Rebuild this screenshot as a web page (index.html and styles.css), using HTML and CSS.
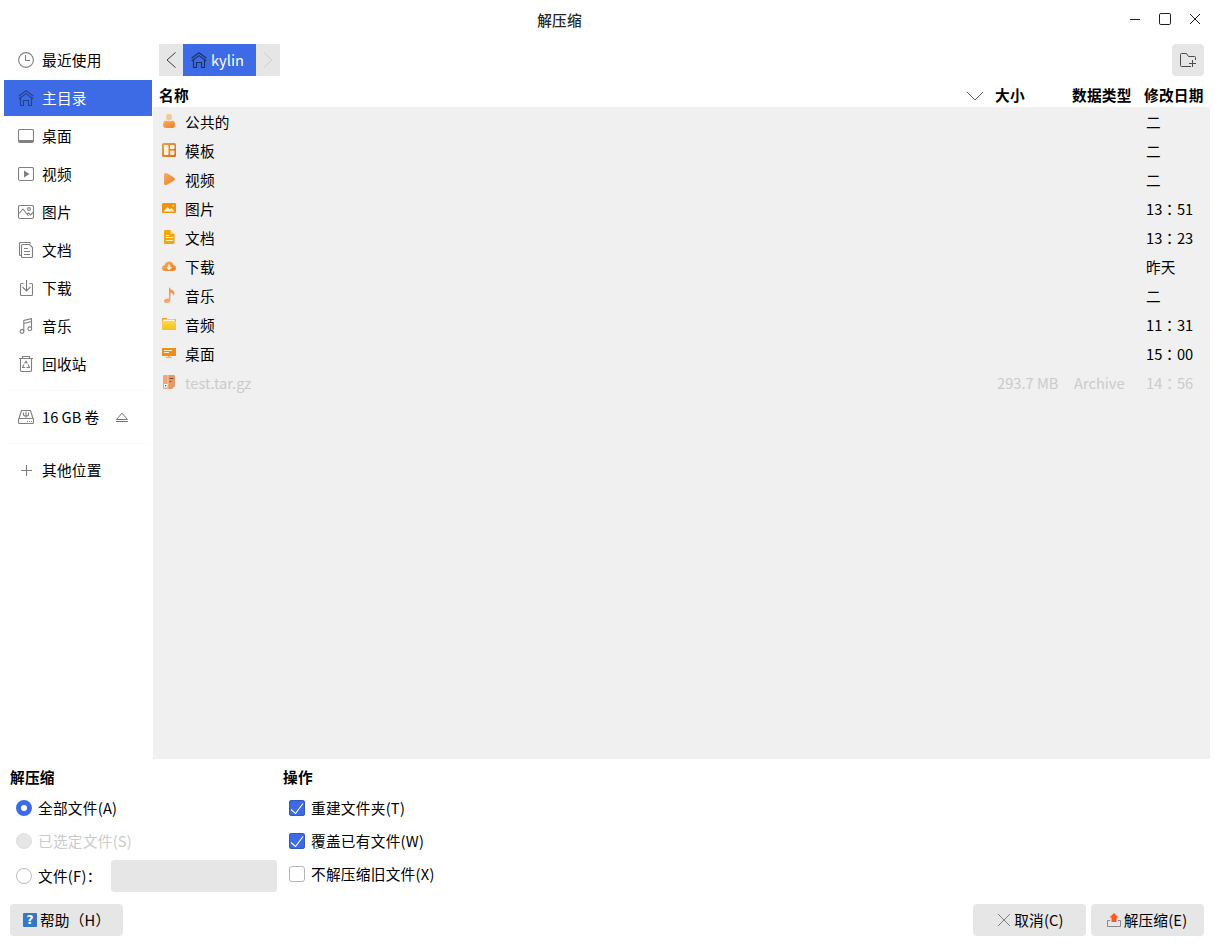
FILE: index.html
```html
<!DOCTYPE html>
<html lang="zh-CN">
<head>
<meta charset="utf-8">
<title>解压缩</title>
<link rel="stylesheet" href="styles.css">
</head>
<body>
<div class="window">
  <header class="titlebar">
    <h1 class="title">解压缩</h1>
    <div class="controls">
      <svg class="ctl" viewBox="0 0 16 16"><path d="M3 8.500h10"/></svg>
      <svg class="ctl" viewBox="0 0 16 16"><rect x="2.500" y="2.500" width="11" height="11" rx="1.300"/></svg>
      <svg class="ctl" viewBox="0 0 16 16"><path d="M3 3l10 10M13 3L3 13"/></svg>
    </div>
  </header>

  <div class="main">
    <nav class="sidebar">
      <div class="place"><svg class="ico" viewBox="0 0 16 16"><circle cx="8" cy="8" r="7.400"/><path d="M7.500 3v5.500H12"/></svg><span>最近使用</span></div>
      <div class="place selected"><svg class="ico" viewBox="0 0 16 16"><path d="M.5 6.200L8 .7l7.500 5.500M.7 9L8 3.600 15.300 9M2.500 8v7.500h3v-5h5v5h3V8"/></svg><span>主目录</span></div>
      <div class="place"><svg class="ico" viewBox="0 0 16 16"><rect x=".5" y="1.500" width="15" height="13" rx="1.500"/><path class="thick" d="M1 13h14"/></svg><span>桌面</span></div>
      <div class="place"><svg class="ico" viewBox="0 0 16 16"><rect x=".5" y="1.500" width="15" height="13" rx="1.500"/><path class="solid" d="M6 4.500l5.500 3.500L6 11.500z"/></svg><span>视频</span></div>
      <div class="place"><svg class="ico" viewBox="0 0 16 16"><rect x=".5" y="1.500" width="15" height="13" rx="1.500"/><path d="M1 9.500l4-4.500 5.500 7M9 10l1.500-1 2 2L15.500 8"/><circle cx="11" cy="5" r="1.400"/></svg><span>图片</span></div>
      <div class="place"><svg class="ico" viewBox="0 0 16 16"><path d="M12.500 1.500q0-1-1-1h-9q-1 0-1 1v11q0 1 1 1h1"/><path d="M4.500 2.500h7l3 3v9q0 1-1 1h-9q-1 0-1-1v-11q0-1 1-1zM6 6.500h4M6 9.500h6M6 12.500h6"/></svg><span>文档</span></div>
      <div class="place"><svg class="ico" viewBox="0 0 16 16"><path d="M5.500 3.500h-2q-1 0-1 1v10q0 1 1 1h10q1 0 1-1v-10q0-1-1-1h-2M8.500 0v11M4.500 7l4 4 4-4"/></svg><span>下载</span></div>
      <div class="place"><svg class="ico" viewBox="0 0 16 16"><circle cx="4" cy="13.500" r="1.900"/><circle cx="11.800" cy="10.800" r="1.900"/><path d="M5.800 13.500V2.500L13.500.6v10.200M5.800 5.500l7.700-2"/></svg><span>音乐</span></div>
      <div class="place"><svg class="ico" viewBox="0 0 16 16"><path d="M1 2.500h14M4.500 2.500v-2h7v2M2.500 2.500v12q0 1 1 1h9q1 0 1-1v-12M6.500 7.500L8 5.200 9.500 7.500M5.900 8.500L4.600 11.500h2.600M10.100 8.500l1.300 3H8.500"/></svg><span>回收站</span></div>
      <hr class="rule">
      <div class="place volume"><svg class="ico" viewBox="0 0 16 16"><path d="M1 9.500L3.500 1.500h9L15 9.500"/><rect x=".5" y="9.500" width="15" height="5" rx="1"/><path d="M5.500 3.500v2q0 1.500 2.500 1.500 2.500 0 2.500-1.500v-2M8 2.500v6M9 12.500h1M11 12.500h1M13 12.500h1"/></svg><span>16 GB 卷</span><svg class="eject" viewBox="0 0 14 12"><path d="M1.500 8.500L7 2.200l5.500 6.300zM1 10.500h12"/></svg></div>
      <hr class="rule">
      <div class="place"><svg class="ico" viewBox="0 0 16 16"><path d="M3 8.500h11M8.500 3v11"/></svg><span>其他位置</span></div>
    </nav>

    <section class="browser">
      <div class="pathbar">
        <div class="crumbs">
          <div class="arrow"><svg viewBox="0 0 24 32"><path d="M16.500 8.500L8 16l8.500 7.500"/></svg></div>
          <div class="crumb"><svg class="ico" viewBox="0 0 16 16"><path d="M.5 6.200L8 .7l7.500 5.500M.7 9L8 3.600 15.300 9M2.500 8v7.500h3v-5h5v5h3V8"/></svg><span>kylin</span></div>
          <div class="arrow off"><svg viewBox="0 0 24 32"><path d="M8 8.500l8 7.500-8 7.500"/></svg></div>
        </div>
        <button class="newfolder"><svg viewBox="0 0 16 16"><path d="M11 14.500H1.500q-1 0-1-1v-11q0-1 1-1h5l2 3h6q1 0 1 1V8M12.500 8v7M9 11.500h7"/></svg></button>
      </div>
      <div class="grid head">
        <span>名称</span><svg class="sort" viewBox="0 0 18 10"><path d="M1 1l8 8 8-8"/></svg><span>大小</span><span>数据类型</span><span>修改日期</span>
      </div>
      <div class="list">
        <svg class="defs"><defs>
          <linearGradient id="or" x1="0" y1="0" x2="1" y2="1"><stop offset="0" stop-color="#f8b063"/><stop offset="1" stop-color="#f07a1c"/></linearGradient>
          <linearGradient id="br" x1="0" y1="0" x2="1" y2="1"><stop offset="0" stop-color="#efa243"/><stop offset="1" stop-color="#d96c22"/></linearGradient>
          <linearGradient id="ye" x1="0" y1="0" x2="0" y2="1"><stop offset="0" stop-color="#fbd84b"/><stop offset="1" stop-color="#f3c11c"/></linearGradient>
          <linearGradient id="nt" x1="0" y1="0" x2="0" y2="1"><stop offset="0" stop-color="#f3922e"/><stop offset="1" stop-color="#f9a676"/></linearGradient>
        </defs></svg>
        <div class="grid row"><svg class="ficon" viewBox="0 0 16 16"><path d="M2 12q0-4 3-4.200 3 1 6 0Q14 8 14 12q0 3-3 3H5q-3 0-3-3z" fill="url(#or)"/><rect x="5" y="1" width="6" height="6.500" rx="2.400" fill="#efcb95"/></svg><span>公共的</span><span class="date" lang="zh-TW">二</span></div>
        <div class="grid row"><svg class="ficon" viewBox="0 0 16 16"><rect x="1" y="1" width="14" height="14" rx="1.500" fill="url(#br)"/><rect x="3" y="3" width="4.500" height="10" rx="1" fill="#fff2e4"/><rect x="9" y="3" width="4.500" height="4" rx="1" fill="#fff2e4"/><rect x="9" y="8.500" width="4.500" height="4.500" rx="1" fill="#fbe2c8"/></svg><span>模板</span><span class="date" lang="zh-TW">二</span></div>
        <div class="grid row"><svg class="ficon" viewBox="0 0 16 16"><path d="M3 3.500Q3 2 4.500 2q2 0 9 5 1 1 0 2-7 5-9 5Q3 14 3 12.500z" fill="url(#or)"/></svg><span>视频</span><span class="date" lang="zh-TW">二</span></div>
        <div class="grid row"><svg class="ficon" viewBox="0 0 16 16"><rect x="1" y="3" width="14" height="10" rx="1" fill="#f19310"/><path d="M2.500 11.500L6.500 7l2.500 2.500 1.500-1.500 3 3.500z" fill="#fff5cf"/><circle cx="12.200" cy="5.800" r=".8" fill="#fff5cf"/></svg><span>图片</span><span class="date" lang="zh-TW">13：51</span></div>
        <div class="grid row"><svg class="ficon" viewBox="0 0 16 16"><path d="M3 2q0-1 1-1h5.500L13.500 5V14q0 1-1 1H4q-1 0-1-1z" fill="#f1a70e"/><path d="M9.500 1l4 4h-4z" fill="#f8dc80"/><path d="M5 6.500h3.500M5 8.500h7M5 11.500h7" stroke="#fff0bd"/></svg><span>文档</span><span class="date" lang="zh-TW">13：23</span></div>
        <div class="grid row"><svg class="ficon" viewBox="0 0 16 16"><path d="M4 13q-3 0-3-3 0-2.500 2.500-3Q4.500 3.500 8 3.500T12.500 7Q15 7.500 15 10t-3 3z" fill="url(#or)"/><path d="M8 6.500v4.500M5.800 9L8 11.200 10.200 9" fill="none" stroke="#fff" stroke-width="1.500"/></svg><span>下载</span><span class="date">昨天</span></div>
        <div class="grid row"><svg class="ficon" viewBox="0 0 16 16"><path d="M8 0q1 2 4 3.500 2 1.500 1 5.500-.5-2.500-3.500-3.500v7q0 3.500-4 3.500-3 0-2.500-2.500.5-2 5-2z" fill="url(#nt)"/></svg><span>音乐</span><span class="date" lang="zh-TW">二</span></div>
        <div class="grid row"><svg class="ficon" viewBox="0 0 16 16"><path d="M1 3q0-1 1-1h3.500l1 1H14q1 0 1 1v3H1z" fill="#e89d24"/><path d="M2 3.500h12v3H2z" fill="#fff5d8"/><path d="M1 5h14v8q0 1-1 1H2q-1 0-1-1z" fill="url(#ye)"/></svg><span>音频</span><span class="date" lang="zh-TW">11：31</span></div>
        <div class="grid row"><svg class="ficon" viewBox="0 0 16 16"><rect x="1" y="3" width="14" height="8" fill="#f08d18"/><path d="M3 5.500h8M3 7.500h5" stroke="#fff0cf"/><path d="M5 12.500h6" stroke="#f5b25e"/><path d="M7 11h2v1H7z" fill="#f5b25e"/></svg><span>桌面</span><span class="date" lang="zh-TW">15：00</span></div>
        <div class="grid row off"><svg class="ficon" viewBox="0 0 16 16"><rect x="2" y="1" width="5" height="14" rx="1" fill="#eda878"/><path d="M7 1h6q1 0 1 1v10l-3 3H7z" fill="#e59a64"/><path d="M7 1v14" stroke="#f5d2b8" stroke-width=".7"/><path d="M8.500 4.500h4M8.500 7.500h2" stroke="#76503d"/><rect x="3" y="10" width="3.500" height="3.500" fill="#fff"/><rect x="4" y="11" width="1.300" height="1.300" fill="#76503d"/></svg><span class="plain">test.tar.gz</span><span class="size">293.7 MB</span><span class="type">Archive</span><span class="date" lang="zh-TW">14：56</span></div>
      </div>
    </section>
  </div>

  <div class="options">
    <fieldset class="group files">
      <legend>解压缩</legend>
      <label class="opt"><i class="radio on"></i>全部文件(A)</label>
      <label class="opt off"><i class="radio disabled"></i>已选定文件(S)</label>
      <label class="opt tall"><i class="radio"></i><span class="label">文件(F)：</span><span class="field"></span></label>
    </fieldset>
    <fieldset class="group">
      <legend>操作</legend>
      <label class="opt"><svg class="check" viewBox="0 0 16 16"><path d="M2 9.500l4.500 4L14 3.500"/></svg>重建文件夹(T)</label>
      <label class="opt"><svg class="check" viewBox="0 0 16 16"><path d="M2 9.500l4.500 4L14 3.500"/></svg>覆盖已有文件(W)</label>
      <label class="opt"><i class="check empty"></i>不解压缩旧文件(X)</label>
    </fieldset>
  </div>

  <footer class="actions">
    <button class="btn help"><span class="qmark">?</span>帮助（H）</button>
    <div class="right">
      <button class="btn cancel"><svg viewBox="0 0 14 14"><path d="M1 1l12 12M13 1L1 13" stroke="#808080"/></svg>取消(C)</button>
      <button class="btn extract"><svg viewBox="0 0 14 14"><path d="M3 7.500H.5v6h13v-6H11" stroke="#888"/><path d="M7 0l4.500 4.500H9.500V9h-5V4.500h-2z" fill="#ff5722"/></svg>解压缩(E)</button>
    </div>
  </footer>
</div>
</body>
</html>
```
FILE: styles.css
```css
* { box-sizing: border-box; }
body {
  margin: 0;
  background: #fff;
  color: #000;
  font: 14.667px/22px "Noto Sans CJK SC", "Noto Sans", sans-serif;
}
svg { display: block; fill: none; flex: none; }
.window { display: flex; flex-direction: column; width: 1214px; height: 946px; overflow: hidden; }

.titlebar { display: grid; grid-template-columns: 1fr auto; height: 40px; align-items: center; padding: 0 11px 0 0; }
.title { margin: 0; padding-right: 8px; font-size: 14.667px; font-weight: 500; text-align: center; color: #262626; letter-spacing: .2px; }
.controls { display: flex; gap: 14px; margin-top: -2px; }
.ctl { width: 16px; height: 16px; stroke: #1f1f1f; }

.main { display: flex; height: 719px; }
.sidebar { width: 153px; padding: 2px 1px 0 4px; display: flex; flex-direction: column; gap: 2px; letter-spacing: .25px; }
.place { display: flex; align-items: center; height: 36px; flex: none; padding-left: 14px; gap: 8px; }
.volume { letter-spacing: 0; }
.ico { width: 16px; height: 16px; stroke: #808080; stroke-width: 1.1; }
.ico .solid { fill: #808080; stroke: none; }
.ico .thick { stroke-width: 2; }
.selected { background: #3d6be5; color: #fff; }
.selected .ico { stroke: #26418c; }
.rule { width: 141px; height: 1px; margin: 6px 0 6px 4px; border: 0; background: #fafafa; flex: none; }
.eject { width: 14px; height: 12px; stroke: #787878; margin-left: 8px; }

.browser { width: 1057px; display: flex; flex-direction: column; }
.pathbar { display: flex; justify-content: space-between; height: 44px; padding: 4px 6px 8px; }
.crumbs { display: flex; height: 32px; background: #e6e6e6; }
.arrow svg { width: 24px; height: 32px; stroke: #3c3c3c; }
.arrow.off svg { stroke: #cfcfcf; }
.crumb { display: flex; align-items: center; gap: 4px; width: 73px; padding-left: 8px; background: #3d6be5; color: #fff; }
.crumb .ico { stroke: #1f305f; }
.newfolder { display: grid; place-items: center; width: 32px; height: 32px; padding: 0; border: 0; border-radius: 4px; background: #e6e6e6; }
.newfolder svg { width: 16px; height: 16px; stroke: #4a4a4a; }

.grid { display: grid; align-items: center; }
.head { grid-template-columns: 807px 29px 77px 72px 1fr; height: 23px; padding: 0 0 2px 6px; font-weight: 700; letter-spacing: .25px; white-space: nowrap; }
.sort { width: 18px; height: 10px; margin-top: 1px; stroke: #606060; }
.list { height: 652px; background: #f0f0f0; letter-spacing: .25px; }
.defs { width: 0; height: 0; }
.row { grid-template-columns: 24px 803px 77px 72px 1fr; height: 29px; padding-left: 8px; white-space: nowrap; }
.ficon { width: 16px; height: 16px; margin-top: -2px; }
.plain, .size, .type, .date { letter-spacing: 0; }
.size { grid-column: 3; padding-left: 9px; }
.type { grid-column: 4; padding-left: 9px; }
.date { grid-column: 5; padding-left: 9px; }
.date:lang(zh-TW) { font-family: "Noto Sans CJK TC", sans-serif; }
.off { color: #cbcbcb; }

.options { display: flex; height: 145px; padding-left: 10px; }
.group { margin: 0; padding: 0; border: 0; }
.group.files { width: 273px; }
.group legend { padding: 7px 0 0; height: 32px; font-weight: 700; letter-spacing: .25px; }
.opt { display: flex; align-items: center; height: 33px; gap: 6px; padding-left: 6px; letter-spacing: .27px; }
.opt.tall { height: 37px; }
.radio { width: 16px; height: 16px; border: 1px solid #bdbdbd; border-radius: 50%; }
.radio.on { border: 5px solid #3d6be5; }
.radio.disabled { background: #e6e6e6; border-color: #dedede; }
.label { width: 67px; }
.field { width: 166px; height: 32px; border-radius: 4px; background: #e6e6e6; }
.check { width: 16px; height: 16px; border: 0; border-radius: 3px; background: #3d6be5; box-shadow: inset 0 0 0 1px #3659bd; stroke: #fff; stroke-width: 1.1; }
.check.empty { background: #fff; border: 1px solid #b5b5b5; box-shadow: none; }

.actions { display: flex; justify-content: space-between; padding: 0 10px; }
.right { display: flex; gap: 5px; }
.btn { display: flex; align-items: center; justify-content: center; width: 113px; height: 32px; padding: 0; border: 0; border-radius: 4px; background: #e6e6e6; color: #000; font: inherit; letter-spacing: .2px; gap: 3px; white-space: nowrap; }
.btn svg { width: 14px; height: 14px; }
.help { justify-content: flex-start; padding-left: 13px; }
.cancel { padding-left: 2px; }
.extract { padding-right: 1px; }
.qmark { width: 14px; height: 14px; border-radius: 1px; background: #3578c6; color: #fff; font: 700 12px/14px "DejaVu Sans", sans-serif; text-align: center; }
```
